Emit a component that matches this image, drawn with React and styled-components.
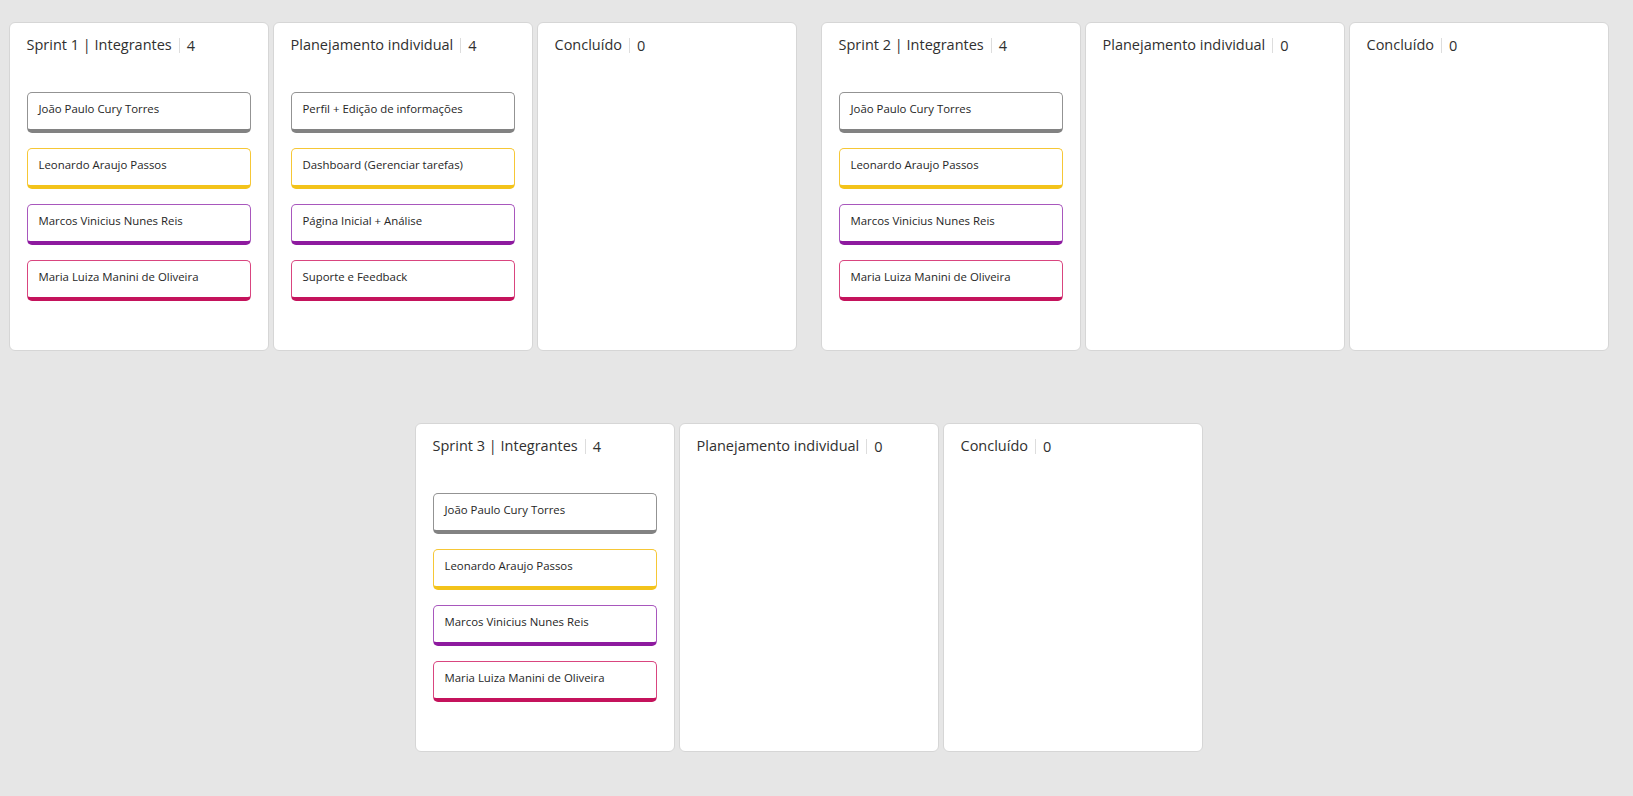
import React from "react";
import styled, { createGlobalStyle } from "styled-components";

const members = [
  { name: "João Paulo Cury Torres", tone: "gray" },
  { name: "Leonardo Araujo Passos", tone: "yellow" },
  { name: "Marcos Vinicius Nunes Reis", tone: "purple" },
  { name: "Maria Luiza Manini de Oliveira", tone: "pink" },
];

const sprints = [
  {
    id: 1,
    planning: [
      { name: "Perfil + Edição de informações", tone: "gray" },
      { name: "Dashboard (Gerenciar tarefas)", tone: "yellow" },
      { name: "Página Inicial + Análise", tone: "purple" },
      { name: "Suporte e Feedback", tone: "pink" },
    ],
  },
  { id: 2, planning: [] },
  { id: 3, planning: [] },
];

const tones = {
  gray: { line: "#939393", base: "#828282" },
  yellow: { line: "#f6c736", base: "#f3c31a" },
  purple: { line: "#a857bd", base: "#8e1a9f" },
  pink: { line: "#d9457f", base: "#c4135c" },
};

const App = () => {
  return (
    <>
      <GlobalStyle />
      <Board>
        {sprints.map((sprint) => (
          <SprintGroup key={sprint.id}>
            <Column>
              <Header>
                Sprint {sprint.id} | Integrantes
                <Count>{members.length}</Count>
              </Header>
              <CardList>
                {members.map((m) => (
                  <Card key={m.name} tone={m.tone}>
                    {m.name}
                  </Card>
                ))}
              </CardList>
            </Column>

            <Column>
              <Header>
                Planejamento individual
                <Count>{sprint.planning.length}</Count>
              </Header>
              <CardList>
                {sprint.planning.map((t) => (
                  <Card key={t.name} tone={t.tone}>
                    {t.name}
                  </Card>
                ))}
              </CardList>
            </Column>

            <Column>
              <Header>
                Concluído
                <Count>0</Count>
              </Header>
            </Column>
          </SprintGroup>
        ))}
      </Board>
    </>
  );
};

export default App;

const GlobalStyle = createGlobalStyle`
  html, body {
    margin: 0;
    background: #e6e6e6;
    font-family: "Open Sans", "Noto Sans", sans-serif;
  }
`;

const Board = styled.div`
  display: flex;
  flex-wrap: wrap;
  justify-content: center;
  column-gap: 24px;
  row-gap: 72px;
  padding: 22px 16px 40px 0;
`;

const SprintGroup = styled.div`
  display: flex;
  gap: 4px;
`;

const Column = styled.div`
  width: 260px;
  height: 329px;
  box-sizing: border-box;
  background: #ffffff;
  border: 1px solid #d6d6d6;
  border-radius: 6px;
  padding: 12px 17px;
`;

const Header = styled.div`
  display: flex;
  align-items: center;
  font-size: 14.5px;
  line-height: 20px;
  color: #303030;
  white-space: nowrap;
`;

const Count = styled.span`
  margin-left: 7px;
  padding-left: 7px;
  border-left: 1px solid #dddddd;
  line-height: 15px;
`;

const CardList = styled.div`
  display: flex;
  flex-direction: column;
  gap: 15px;
  margin-top: 37px;
`;

const Card = styled.div`
  height: 41px;
  box-sizing: border-box;
  display: flex;
  align-items: center;
  padding: 0 11px 5px;
  border: 1px solid ${(p) => tones[p.tone].line};
  border-bottom: 4px solid ${(p) => tones[p.tone].base};
  border-radius: 5px;
  background: #ffffff;
  font-size: 11.4px;
  color: #262626;
`;
